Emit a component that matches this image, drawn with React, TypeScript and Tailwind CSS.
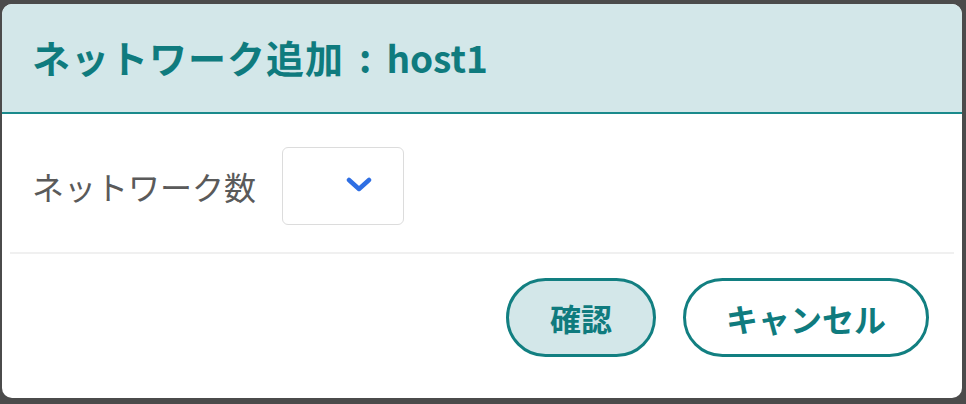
export default function App() {
  return (
    <div
      className="w-[966px] h-[404px] bg-[#4b4b4b] pt-[4px] pl-[2px]"
      style={{ fontFamily: '"Noto Sans CJK JP", "Noto Sans", sans-serif' }}
    >
      <div className="w-[960px] h-[394px] bg-white rounded-[10px] overflow-hidden flex flex-col">
        {/* Header */}
        <div className="h-[110px] bg-[#d3e7e9] border-b-2 border-[#1a8a8c] flex items-center pl-[30px] pb-[3px]">
          <h1 className="text-[38px] font-bold text-[#0f7b7e] leading-none">
            <span className="tracking-[1px]">ネットワーク追加</span>
            <span className="ml-[15px]">:</span>
            <span className="ml-[15px] text-[37px]">host1</span>
          </h1>
        </div>

        {/* Body */}
        <div className="pt-[33px] pb-[27px] pl-[30px] flex items-center gap-[26px]">
          <span className="text-[32px] text-[#5a5a5a] leading-none">ネットワーク数</span>
          <button
            type="button"
            className="w-[122px] h-[78px] border border-[#dcdcdc] rounded-[6px] bg-white flex items-center justify-center"
          >
            <svg width="26" height="16" viewBox="0 0 26 16" fill="none" className="ml-[32px] mt-[-2px]">
              <path d="M3 3l10 9 10-9" stroke="#2f6fe3" strokeWidth="4.5" strokeLinecap="round" strokeLinejoin="round" />
            </svg>
          </button>
        </div>

        <div className="mx-[8px] h-[2px] bg-[#f0f0f0]" />

        {/* Footer */}
        <div className="pt-[24px] pr-[33px] flex justify-end gap-[27px]">
          <button
            type="button"
            className="w-[150px] h-[79px] rounded-full border-[3px] border-[#127f81] bg-[#d3e7e9] text-[31px] font-bold text-[#0f7b7e] leading-none"
          >
            確認
          </button>
          <button
            type="button"
            className="w-[246px] h-[79px] rounded-full border-[3px] border-[#127f81] bg-white text-[32px] font-bold text-[#0f7b7e] leading-none"
          >
            キャンセル
          </button>
        </div>
      </div>
    </div>
  )
}
